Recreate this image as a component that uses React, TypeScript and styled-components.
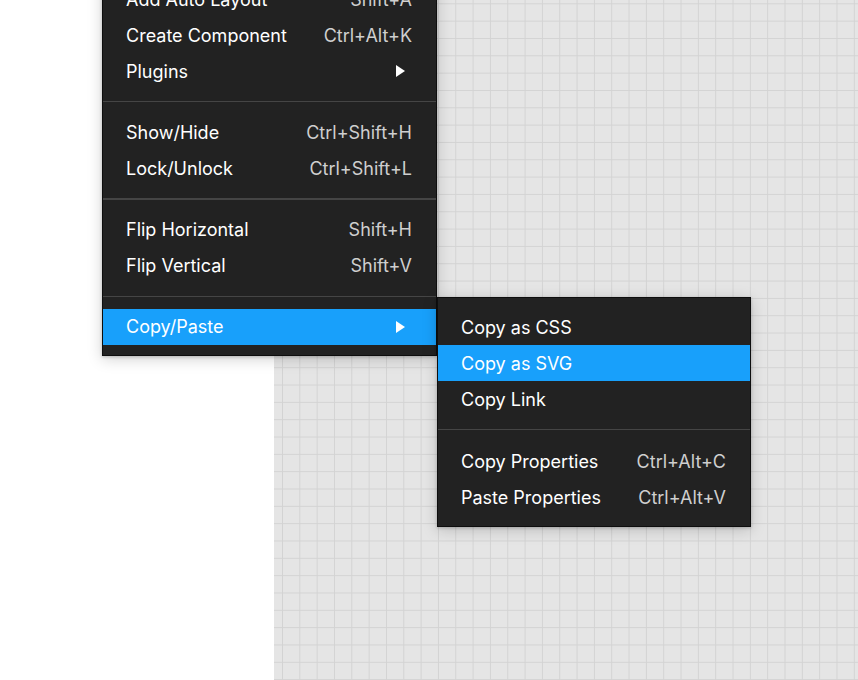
import React from "react";
import styled, { createGlobalStyle } from "styled-components";

const GlobalStyle = createGlobalStyle`
  html, body { margin: 0; padding: 0; }
  body {
    width: 858px;
    height: 680px;
    overflow: hidden;
    font-family: Inter, "Noto Sans", sans-serif;
  }
`;

const Page = styled.div`
  position: relative;
  display: flex;
  width: 858px;
  height: 680px;
  overflow: hidden;
`;

const LeftPane = styled.div`
  width: 274px;
  flex: none;
  background: #ffffff;
`;

const Canvas = styled.div`
  flex: 1;
  background-color: #e5e5e5;
  background-image:
    linear-gradient(to right, #d3d3d3 1px, transparent 1px),
    linear-gradient(to bottom, #d3d3d3 1px, transparent 1px);
  background-size: 17.333px 17.333px;
  background-position: 8px 3.33px;
`;

const Menu = styled.div<{ $left: number; $top: number; $width: number; $padBottom: number }>`
  position: absolute;
  left: ${(p) => p.$left}px;
  top: ${(p) => p.$top}px;
  width: ${(p) => p.$width}px;
  box-sizing: border-box;
  display: flex;
  flex-direction: column;
  padding: 11px 0 ${(p) => p.$padBottom}px;
  background: #222222;
  border: 1px solid #0e0e0e;
  box-shadow: 0 3px 14px rgba(0, 0, 0, 0.18), 0 1px 3px rgba(0, 0, 0, 0.2);
`;

const Row = styled.div<{ $active?: boolean }>`
  display: flex;
  align-items: center;
  justify-content: space-between;
  height: 36px;
  padding: 0 24px 0 23px;
  background: ${(p) => (p.$active ? "#18a0fb" : "transparent")};
  font-size: 18px;
  white-space: nowrap;
`;

const Label = styled.span`
  color: #ffffff;
`;

const Shortcut = styled.span`
  color: #cfcfcf;
`;

const Arrow = styled.svg`
  width: 9px;
  height: 12px;
  margin-right: 7px;
  display: block;
`;

const Separator = styled.div<{ $gapBelow: number }>`
  height: 1.33px;
  margin: 12px 0 ${(p) => p.$gapBelow}px;
  background: #454545;
`;

type Item =
  | { sep: true }
  | { label: string; shortcut?: string; sub?: boolean; active?: boolean; sep?: false };

const mainItems: Item[] = [
  { label: "Add Auto Layout", shortcut: "Shift+A" },
  { label: "Create Component", shortcut: "Ctrl+Alt+K" },
  { label: "Plugins", sub: true },
  { sep: true },
  { label: "Show/Hide", shortcut: "Ctrl+Shift+H" },
  { label: "Lock/Unlock", shortcut: "Ctrl+Shift+L" },
  { sep: true },
  { label: "Flip Horizontal", shortcut: "Shift+H" },
  { label: "Flip Vertical", shortcut: "Shift+V" },
  { sep: true },
  { label: "Copy/Paste", sub: true, active: true },
];

const subItems: Item[] = [
  { label: "Copy as CSS" },
  { label: "Copy as SVG", active: true },
  { label: "Copy Link" },
  { sep: true },
  { label: "Copy Properties", shortcut: "Ctrl+Alt+C" },
  { label: "Paste Properties", shortcut: "Ctrl+Alt+V" },
];

const renderItems = (items: Item[], gapBelow: number) =>
  items.map((it, i) =>
    it.sep ? (
      <Separator key={i} $gapBelow={gapBelow} />
    ) : (
      <Row key={i} $active={it.active}>
        <Label>{it.label}</Label>
        {it.shortcut && <Shortcut>{it.shortcut}</Shortcut>}
        {it.sub && (
          <Arrow viewBox="0 0 9 12">
            <polygon points="0,0 9,6 0,12" fill="#ffffff" />
          </Arrow>
        )}
      </Row>
    )
  );

export default function App() {
  return (
    <>
      <GlobalStyle />
      <Page>
        <LeftPane />
        <Canvas />
        <Menu $left={102} $top={-31} $width={335} $padBottom={10}>
          {renderItems(mainItems, 12)}
        </Menu>
        <Menu $left={437} $top={297} $width={314} $padBottom={11}>
          {renderItems(subItems, 13)}
        </Menu>
      </Page>
    </>
  );
}
